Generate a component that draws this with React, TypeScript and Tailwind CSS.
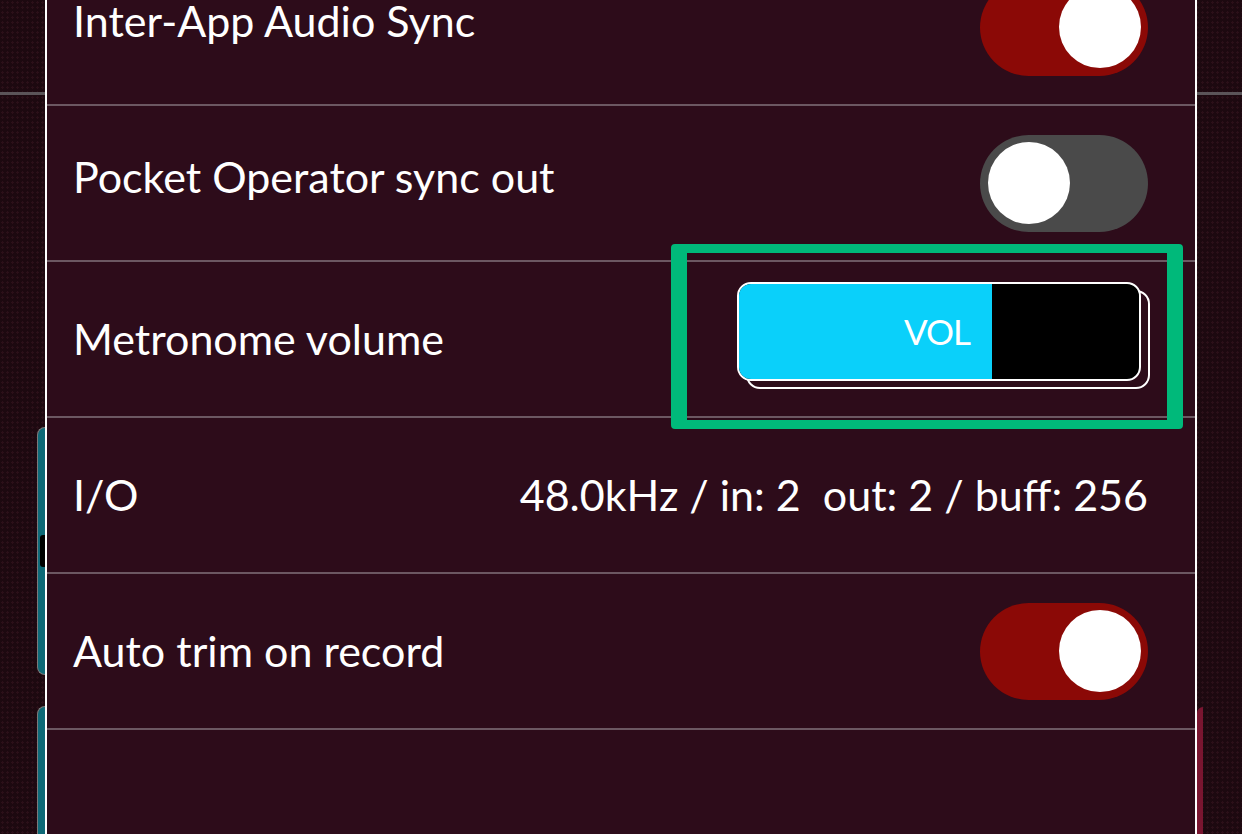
import type { ReactNode } from 'react'

const textFont = "font-['Lato',sans-serif]"

function Toggle({ on }: { on: boolean }) {
  return (
    <div
      className={
        on
          ? 'flex h-[97px] w-[168px] items-center justify-end rounded-full bg-[#8b0906] px-[7px]'
          : 'flex h-[97px] w-[168px] items-center justify-start rounded-full bg-[#4a4a4a] px-[8px]'
      }
    >
      <div className="h-[82px] w-[82px] rounded-full bg-white" />
    </div>
  )
}

function VolumeSlider() {
  return (
    <div className="relative mb-[7px] mr-[-2px] h-[107px] w-[413px]">
      {/* offset outline behind the slider */}
      <div className="absolute left-[9px] top-[8px] h-[99px] w-[404px] rounded-[14px] border-2 border-white" />
      <div className="absolute left-0 top-0 flex h-[99px] w-[404px] overflow-hidden rounded-[14px] border-2 border-white bg-black">
        <div className="flex w-[253px] items-center justify-end bg-[#0ad0fa] pr-[22px]">
          <span className={`${textFont} text-[35px] leading-none tracking-[-1px] text-white`}>VOL</span>
        </div>
      </div>
    </div>
  )
}

function Row({
  label,
  children,
  first,
  raised,
  annotate,
}: {
  label: string
  children?: ReactNode
  first?: boolean
  raised?: boolean
  annotate?: boolean
}) {
  return (
    <div
      className={`relative flex h-[156px] shrink-0 items-center justify-between border-b-2 border-[#6c5862] pl-[26px] pr-[47px] ${
        first ? '-mt-[50px]' : ''
      }`}
    >
      <span className={`${textFont} text-[43px] leading-[38px] text-white ${raised ? 'mb-[12px]' : ''}`}>{label}</span>
      {children}
      {annotate && (
        <div className="absolute -top-[18px] left-[624px] h-[185px] w-[512px] rounded-[4px] border-x-[16px] border-y-[9px] border-[#00b97a]" />
      )}
    </div>
  )
}

export default function App() {
  return (
    <div className="flex h-[834px] w-[1242px] overflow-hidden bg-[#1d0910] bg-[radial-gradient(circle,#2c1019_1px,transparent_1.3px)] bg-[length:5px_5px]">
      {/* left edge of the page underneath */}
      <div className="flex w-[45px] shrink-0 flex-col">
        <div className="mt-[92px] h-[3px] bg-[#5a5458]" />
        <div className="ml-[37px] mt-[332px] flex h-[248px] flex-col items-end rounded-l-[8px] border-y border-l border-[#7a7a7a] bg-[#0e6977]">
          <div className="mt-[107px] h-[32px] w-[5px] rounded-l-[3px] bg-black" />
        </div>
        <div className="ml-[37px] mt-[31px] flex-1 rounded-tl-[8px] border-l border-t border-[#7a7a7a] bg-[#0e6977]" />
      </div>

      {/* settings panel */}
      <div className="flex w-[1152px] shrink-0 flex-col border-x-2 border-white bg-[#2d0c1a]">
        <Row label="Inter-App Audio Sync" first raised>
          <Toggle on />
        </Row>
        <Row label="Pocket Operator sync out" raised>
          <Toggle on={false} />
        </Row>
        <Row label="Metronome volume" annotate>
          <VolumeSlider />
        </Row>
        <Row label="I/O">
          <span className={`${textFont} whitespace-pre text-[43px] leading-[38px] text-white`}>
            {'48.0kHz / in: 2  out: 2 / buff: 256'}
          </span>
        </Row>
        <Row label="Auto trim on record">
          <Toggle on />
        </Row>
      </div>

      {/* right edge of the page underneath */}
      <div className="flex w-[45px] shrink-0 flex-col">
        <div className="mt-[92px] h-[3px] bg-[#5a5458]" />
        <div className="mt-[612px] w-[6px] flex-1 rounded-tl-[6px] bg-[#7a1530]" />
      </div>
    </div>
  )
}
